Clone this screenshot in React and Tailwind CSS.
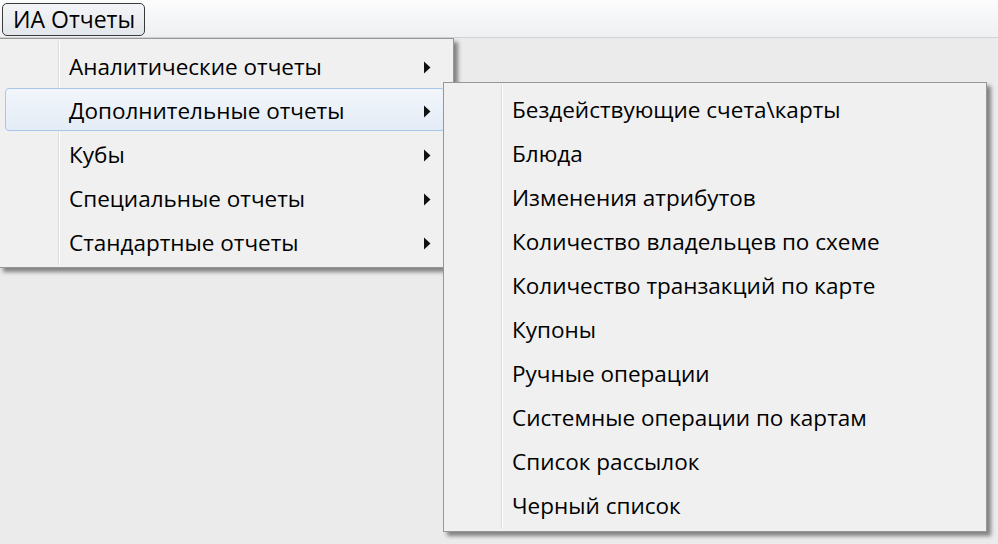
import { useState } from 'react'

const mainItems = [
  'Аналитические отчеты',
  'Дополнительные отчеты',
  'Кубы',
  'Специальные отчеты',
  'Стандартные отчеты',
]

const subItems = [
  'Бездействующие счета\\карты',
  'Блюда',
  'Изменения атрибутов',
  'Количество владельцев по схеме',
  'Количество транзакций по карте',
  'Купоны',
  'Ручные операции',
  'Системные операции по картам',
  'Список рассылок',
  'Черный список',
]

const Arrow = () => (
  <svg width="8" height="13" viewBox="0 0 8 13" className="shrink-0">
    <path d="M1 0.5 L7.5 6.5 L1 12.5 Z" fill="#111" />
  </svg>
)

const App = () => {
  const [active] = useState(1)

  return (
    <div
      className="relative h-[544px] w-[998px] overflow-hidden bg-[#ebebeb] text-black"
      style={{ fontFamily: '"Open Sans", "Noto Sans", sans-serif' }}
    >
      {/* menu bar */}
      <div className="flex h-[38px] items-start border-b border-[#cfd2d6] bg-gradient-to-b from-[#fcfcfd] to-[#eef0f2] px-[2px] pt-[3px]">
        <button className="flex h-[33px] w-[143px] items-center rounded-[5px] border border-[#3a3a3a] bg-gradient-to-b from-[#f4f5f7] to-[#e2e5ea] pl-[10px] text-[23px] leading-none">
          ИА Отчеты
        </button>
      </div>

      {/* first level menu */}
      <div className="absolute left-[-1px] top-[38px] w-[455px] border border-[#979797] bg-[#f0f0f0] pt-[6px] pb-[2px] shadow-[4px_4px_4px_rgba(0,0,0,0.45)]">
        <div className="absolute top-[2px] bottom-[2px] left-[58px] w-[2px] border-l border-[#dcdcdc] bg-white" />
        {mainItems.map((item, i) => (
          <div key={item} className="relative h-[44px]">
            {i === active && (
              <div className="absolute left-[5px] right-[8px] top-[-1px] bottom-[2px] rounded-[4px] border border-[#a8c6ea] bg-gradient-to-b from-[#f2f6fb] to-[#e4ecf6]" />
            )}
            <div className="relative flex h-full items-center pl-[69px] pr-[22px]">
              <span className="flex-1 text-[22.5px]">{item}</span>
              <Arrow />
            </div>
          </div>
        ))}
      </div>

      {/* sub menu */}
      <div className="absolute left-[443px] top-[82px] w-[544px] border border-[#979797] bg-[#f0f0f0] pt-[5px] pb-[3px] shadow-[4px_4px_4px_rgba(0,0,0,0.45)]">
        <div className="absolute top-[2px] bottom-[2px] left-[57px] w-[2px] border-l border-[#dcdcdc] bg-white" />
        {subItems.map((item) => (
          <div key={item} className="relative flex h-[44px] items-center pl-[68px]">
            <span className="text-[22.5px]">{item}</span>
          </div>
        ))}
      </div>
    </div>
  )
}

export default App
